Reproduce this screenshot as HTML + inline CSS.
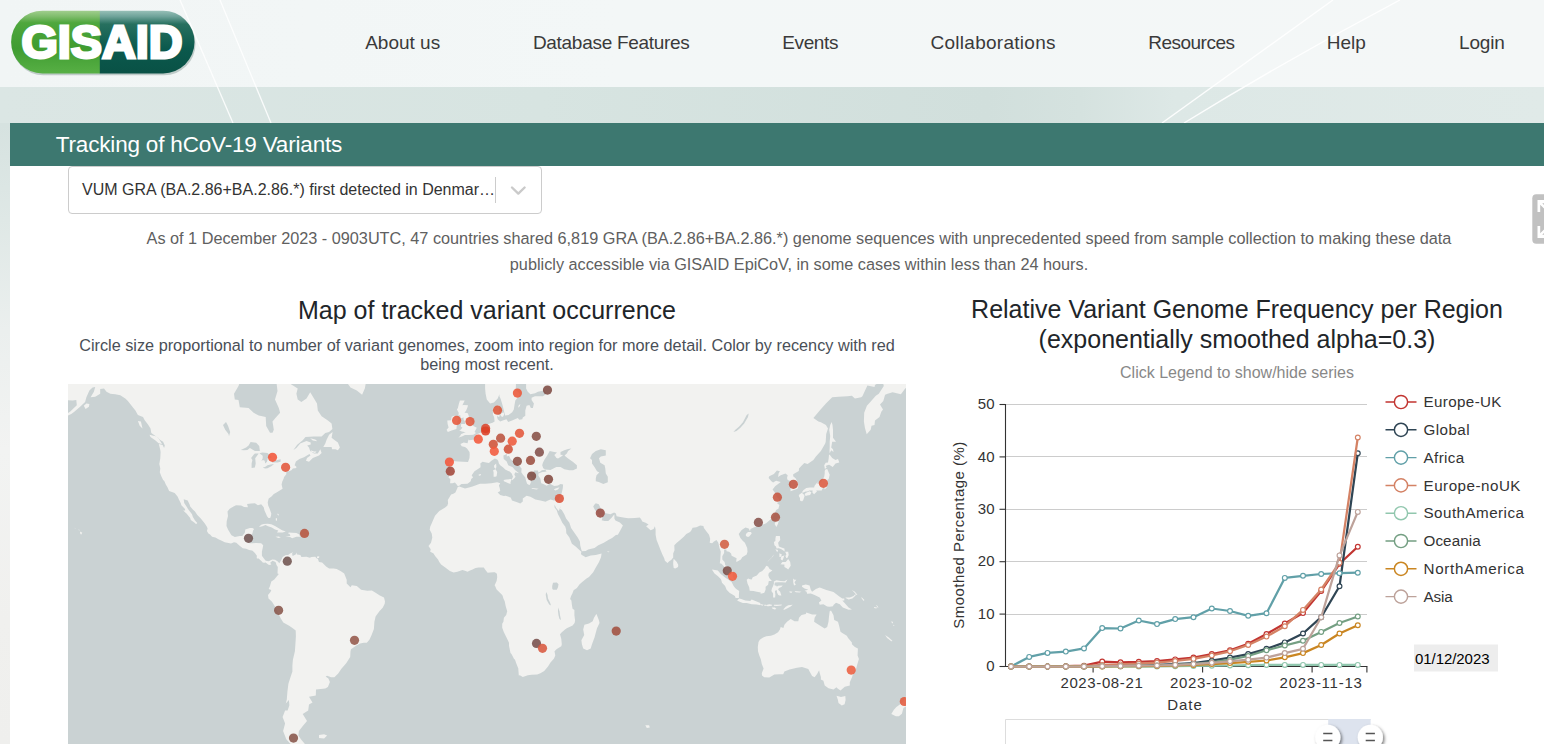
<!DOCTYPE html>
<html><head><meta charset="utf-8"><title>GISAID - hCov19 Variants</title>
<style>
*{box-sizing:border-box;margin:0;padding:0}
html,body{width:1544px;height:744px;overflow:hidden}
body{font-family:"Liberation Sans",sans-serif;position:relative;background:linear-gradient(180deg,#d3e0de 0px,#d6e2e0 125px,#dfe8e6 220px,#ebefee 330px,#f2f3f2 450px,#f0f0ee 620px,#efefed 744px)}
.abs{position:absolute;white-space:nowrap}
#hdr{position:absolute;left:0;top:0;width:1544px;height:87px;background:linear-gradient(90deg,#f1f5f5 0%,#f3f7f7 40%,#f4f7f7 100%);box-shadow:0 1px 5px rgba(40,70,65,.42)}
#sub{position:absolute;left:0;top:87px;width:1544px;height:36px;background:linear-gradient(90deg,#dbe6e4 0%,#d7e4e1 35%,#d1dfdc 64%,#d5e2df 70%,#dde8e6 76%,#e0eae8 100%)}
.nav{position:absolute;top:30.5px;font-size:19px;line-height:24px;color:#3a3a3a;white-space:nowrap}
#banner{position:absolute;left:10px;top:123px;width:1534px;height:43px;background:#3d7870}
#banner span{position:absolute;left:45.8px;top:8.2px;font-size:22.5px;letter-spacing:-.18px;line-height:28px;color:#fff;white-space:nowrap}
#panel{position:absolute;left:10px;top:166px;width:1534px;height:578px;background:#fff}
#dd{position:absolute;left:68px;top:166px;width:474.3px;height:47.6px;border:1px solid #ccc;border-radius:4px;background:#fff}
#dd .t{position:absolute;left:13px;top:13.3px;font-size:16px;line-height:20px;color:#333;white-space:nowrap}
#dd .sep{position:absolute;left:426.3px;top:10.3px;width:1px;height:25.4px;background:#ccc}
.c{position:absolute;text-align:center;white-space:nowrap}
#map{position:absolute;left:68px;top:384px;width:838px;height:360px;background:#cad2d3;overflow:hidden}
</style></head><body>
<div id="hdr"></div>
<div id="sub"></div>
<svg class="abs" style="left:0;top:0" width="1544" height="123" viewBox="0 0 1544 123">
<path d="M180 0L233 123" stroke="#fff" stroke-width="1.3" opacity=".85" fill="none"/>
<path d="M220 0L271 123" stroke="#fff" stroke-width="1.3" opacity=".85" fill="none"/>
<path d="M1333 0L1162 123" stroke="#fff" stroke-width="1.4" opacity=".9" fill="none"/>
<path d="M1400 0Q1290 58 1184 123" stroke="#fff" stroke-width="1.4" opacity=".9" fill="none"/>
</svg>
<!-- logo -->
<svg class="abs" style="left:8px;top:7px" width="192" height="72" viewBox="0 0 192 72">
<defs>
<linearGradient id="lg1" x1="0" y1="0" x2="0" y2="1"><stop offset="0" stop-color="#a5d092"/><stop offset=".1" stop-color="#7fbd6c"/><stop offset=".2" stop-color="#4fa73d"/><stop offset=".6" stop-color="#3f9c31"/><stop offset="1" stop-color="#58b045"/></linearGradient>
<linearGradient id="lg2" x1="0" y1="0" x2="0" y2="1"><stop offset="0" stop-color="#9cc3bb"/><stop offset=".1" stop-color="#6fa39a"/><stop offset=".22" stop-color="#27705f"/><stop offset=".6" stop-color="#0b594d"/><stop offset="1" stop-color="#095145"/></linearGradient>
<clipPath id="pill"><rect x="3.1" y="3.7" width="183.4" height="62.7" rx="31.35"/></clipPath>
</defs>
<rect x="4.1" y="5.6" width="183.4" height="62.7" rx="31.35" fill="#56746d" opacity=".32"/>
<g clip-path="url(#pill)"><rect x="3" y="3" width="89" height="64" fill="url(#lg1)"/><rect x="91.8" y="3" width="97" height="64" fill="url(#lg2)"/></g>
<text x="13.4" y="51.2" font-family="Liberation Sans, sans-serif" font-weight="bold" font-size="47" fill="#fff" stroke="#fff" stroke-width="2.9" stroke-linejoin="miter" textLength="161.2" lengthAdjust="spacingAndGlyphs">GISAID</text>
</svg>
<div class="nav" style="left:365.2px">About us</div>
<div class="nav" style="left:532.9px;letter-spacing:-.29px">Database Features</div>
<div class="nav" style="left:782.3px;letter-spacing:-.4px">Events</div>
<div class="nav" style="left:930.5px;letter-spacing:.27px">Collaborations</div>
<div class="nav" style="left:1148.2px;letter-spacing:-.5px">Resources</div>
<div class="nav" style="left:1326.8px">Help</div>
<div class="nav" style="left:1459px;letter-spacing:-.18px">Login</div>

<div id="banner"><span>Tracking of hCoV-19 Variants</span></div>
<div id="panel"></div>
<div id="dd"><div class="t">VUM GRA (BA.2.86+BA.2.86.*) first detected in Denmar…</div><div class="sep"></div>
<svg class="abs" style="left:440px;top:15px" width="20" height="16" viewBox="0 0 20 16"><path d="M3 5.5L9.3 11.6L15.6 5.5" fill="none" stroke="#cacaca" stroke-width="2.4" stroke-linecap="round" stroke-linejoin="round"/></svg></div>

<div class="c" id="p1" style="left:68px;width:1462px;top:225.1px;font-size:16.25px;line-height:26px;color:#606060">As of 1 December 2023 - 0903UTC, 47 countries shared 6,819 GRA (BA.2.86+BA.2.86.*) genome sequences with unprecedented speed from sample collection to making these data<br>publicly accessible via GISAID EpiCoV, in some cases within less than 24 hours.</div>

<div class="c" id="mt" style="left:68px;width:838px;top:296px;font-size:25px;line-height:28px;color:#212529">Map of tracked variant occurrence</div>
<div class="c" id="ms" style="left:68px;width:838px;top:336.1px;font-size:16.25px;line-height:19.1px;color:#4a4f57">Circle size proportional to number of variant genomes, zoom into region for more detail. Color by recency with red<br>being most recent.</div>

<div class="c" id="ct" style="left:937px;width:600px;top:294.8px;font-size:25px;line-height:29.7px;color:#212529">Relative Variant Genome Frequency per Region<br>(exponentially smoothed alpha=0.3)</div>
<div class="c" id="cl" style="left:937px;width:600px;top:363.4px;font-size:16px;line-height:20px;color:#888">Click Legend to show/hide series</div>

<div id="map"><svg width="838" height="360" viewBox="0 0 838 360" style="display:block">
<path d="M-18.1 -21.2L-13.1 -14.7L-0.5 -14.1L-0.5 -8.9L-9.3 -6.1L-13.1 1.4L-8.1 8.2L-3.0 9.7L-3.0 16.1L4.5 16.6L8.3 16.1L8.8 21.3L2.0 27.8L-4.3 31.4L-10.1 34.9L-3.0 33.1L3.3 30.0L6.3 27.8L12.1 22.7L17.1 18.0L18.4 13.2L21.4 6.6L24.6 3.5L27.2 3.0L25.9 7.7L22.6 13.2L27.2 12.7L32.2 9.7L32.2 5.1L36.0 4.6L38.5 7.7L42.3 9.7L47.3 10.2L52.3 11.2L57.3 14.6L59.9 17.1L63.6 21.8L67.4 26.4L69.9 30.9L75.0 33.1L76.7 36.2L80.0 40.4L82.5 44.6L83.3 49.1L88.8 53.0L92.6 56.2L95.1 57.7L96.8 61.5L96.1 64.1L94.6 61.1L90.8 60.0L92.3 66.0L92.6 68.1L92.3 74.2L91.3 80.1L92.3 84.6L91.8 88.2L93.1 91.8L95.1 96.0L96.3 97.0L97.8 100.4L99.6 103.6L101.1 106.9L104.6 108.2L106.7 109.1L109.7 112.7L110.9 115.6L112.7 118.9L113.4 121.2L117.0 124.9L117.2 126.4L115.2 126.6L118.7 129.8L122.2 134.0L122.8 135.9L127.0 138.9L128.0 140.3L129.3 138.9L127.0 136.5L124.8 132.8L124.0 130.3L120.7 126.1L118.5 122.4L116.2 118.9L115.7 115.3L119.7 116.5L121.5 120.3L122.2 122.6L125.3 126.1L127.0 127.5L129.3 130.9L132.8 134.5L136.8 139.5L138.9 142.7L139.6 144.6L138.9 147.1L140.4 149.5L142.1 150.5L144.1 152.7L147.4 153.5L150.4 155.3L153.2 156.6L156.7 158.2L160.5 159.0L163.0 159.5L166.0 158.2L168.3 158.7L170.5 160.8L172.6 162.6L174.8 164.2L178.1 164.7L181.1 166.0L183.9 166.5L184.6 166.8L186.9 169.1L188.9 171.7L188.7 173.4L188.9 174.5L190.7 174.5L191.7 175.5L193.9 177.5L194.7 178.5L196.2 178.8L197.7 178.5L199.2 179.8L201.0 181.1L203.3 180.6L202.2 178.8L204.5 176.8L207.0 177.8L207.8 178.5L208.5 181.1L210.0 179.6L211.3 179.3L209.8 177.5L207.0 175.7L204.3 175.5L200.7 177.3L197.7 176.8L195.7 174.2L193.9 171.7L193.9 167.8L194.7 163.9L195.2 161.3L193.2 159.2L188.2 159.0L184.4 159.2L181.6 159.2L180.9 159.0L182.6 156.1L182.4 152.1L184.4 149.5L185.1 146.5L186.1 144.9L184.4 144.1L181.9 144.1L177.3 145.4L176.8 148.7L174.3 152.1L171.8 151.9L166.8 152.9L163.5 151.3L162.8 150.3L160.0 145.4L158.5 141.9L158.7 137.3L160.0 132.0L159.5 127.5L161.7 124.7L165.5 122.6L168.0 121.2L173.1 121.5L176.1 122.9L179.9 123.2L179.1 120.0L183.1 119.5L186.9 119.2L189.9 121.2L193.2 120.3L195.7 123.2L196.5 126.6L198.2 130.3L199.0 132.3L200.5 134.0L202.2 134.0L203.0 131.7L203.3 129.5L201.7 124.9L200.2 121.5L199.7 118.3L200.7 114.5L203.5 112.4L205.8 110.0L208.5 108.5L211.8 106.6L214.6 104.8L213.6 100.4L214.3 97.6L215.6 94.7L216.1 93.1L218.3 90.2L218.3 87.6L220.9 87.2L223.4 86.2L224.9 84.6L226.9 84.2L228.4 83.9L228.2 82.5L226.6 81.2L227.9 77.4L231.4 74.9L236.0 73.2L238.5 71.8L241.5 70.0L242.5 71.4L239.0 73.9L238.0 76.7L241.0 77.7L244.8 73.9L251.0 71.4L253.6 68.9L252.3 65.2L249.8 69.6L246.0 69.6L242.2 67.1L241.0 63.4L239.2 61.5L242.7 60.4L242.7 58.5L238.5 56.9L232.2 59.6L228.4 64.1L225.4 66.0L229.2 60.7L234.7 56.2L237.5 53.0L246.0 52.6L253.6 52.6L257.3 49.1L261.1 47.9L264.4 45.0L263.6 39.6L259.9 36.6L253.6 32.3L249.8 26.4L249.0 19.5L246.0 14.6L242.2 8.2L238.5 14.6L233.4 18.0L229.7 15.6L228.4 9.7L229.7 4.6L223.4 0.4L218.3 -2.3L208.3 -2.9L209.5 7.1L207.0 15.6L210.8 24.1L212.1 28.7L207.0 34.4L204.5 37.5L205.8 45.8L204.5 48.7L202.0 48.7L198.2 42.1L197.7 33.1L190.7 31.4L185.6 28.7L180.6 24.1L171.8 23.2L170.5 16.1L166.8 15.6L166.0 9.7L170.5 2.0L173.1 -5.0L176.8 -8.9L178.1 -66.1L-18.1 -66.1ZM81.5 50.7L87.5 52.3L90.1 53.8L94.1 60.0L90.6 59.2L87.5 56.5L82.5 53.0ZM15.8 21.8L18.4 19.5L21.4 19.9L20.9 22.7L17.6 25.1ZM69.9 37.0L72.9 37.5L74.5 44.6L71.7 41.7ZM255.3 63.0L257.3 59.6L258.6 55.8L261.1 50.7L264.6 47.9L263.6 53.8L266.1 55.8L269.9 58.5L271.9 63.4L269.9 66.3L267.4 65.2L264.1 65.2L263.6 63.0ZM242.7 66.3L246.0 67.4L248.5 67.4L247.0 68.9L243.5 67.8ZM242.2 54.2L247.3 55.4L249.3 57.3L244.8 56.5ZM294.1 10.7L296.8 4.6L298.8 -6.1L303.9 -17.6L316.5 -30.0L329.0 -50.6L266.1 -50.6L271.2 -30.0L274.9 -11.8L278.7 -1.8L282.5 3.5L288.8 6.6ZM190.9 143.0L193.2 140.8L195.7 140.0L199.5 139.7L203.3 140.3L207.0 141.9L209.5 143.6L214.1 146.3L217.8 147.6L214.6 148.4L209.0 148.4L210.3 146.5L207.0 145.4L203.8 143.6L200.0 142.2L197.5 141.1L194.4 142.2ZM217.3 151.9L222.1 152.9L224.1 154.2L228.4 152.7L232.4 152.7L230.9 150.3L228.4 148.9L224.1 148.7L220.9 148.4L219.9 149.2L221.6 150.0L222.4 151.9ZM207.5 152.7L210.8 152.4L212.8 153.5L210.3 154.0ZM235.5 152.4L239.2 152.7L238.7 153.5L235.5 153.5ZM249.0 172.4L251.3 172.2L251.0 174.0L249.0 174.0ZM207.8 134.2L209.0 134.2L209.0 136.7L207.8 136.5ZM209.8 129.5L210.8 130.6L210.5 131.7L209.3 130.3ZM12.1 147.6L14.3 148.7L13.1 150.8L12.1 149.2ZM10.3 145.4L11.8 146.0L11.1 146.5ZM6.5 143.8L7.8 144.4L7.0 144.6ZM208.5 181.1L209.8 183.1L209.5 189.4L210.8 189.9L206.3 195.5L203.3 197.5L202.0 202.0L200.7 205.0L203.3 206.0L202.5 208.1L200.0 211.1L200.5 214.6L204.0 217.7L206.8 222.2L210.5 229.9L212.8 234.6L215.3 238.5L221.6 242.1L225.1 244.5L227.7 246.6L227.9 252.2L227.4 260.3L226.9 267.3L224.9 275.8L224.4 281.6L224.4 287.5L221.9 295.1L220.4 299.8L219.4 307.8L218.8 315.5L217.8 319.5L220.9 316.1L221.4 321.3L219.6 326.5L217.1 326.5L214.6 333.0L217.1 339.4L215.1 347.1L218.3 355.2L222.1 359.4L225.9 362.4L228.4 368.1L235.2 369.9L241.0 365.0L232.9 355.2L232.4 354.4L230.4 351.5L230.9 347.1L234.4 342.5L239.0 337.1L234.7 330.1L240.2 326.5L241.0 320.6L244.5 318.5L241.0 312.8L247.8 311.4L248.0 305.6L257.3 304.6L259.9 303.0L261.9 297.9L260.4 294.5L257.6 292.4L259.1 291.8L263.1 293.3L266.4 293.3L270.2 289.6L273.4 284.8L278.2 279.3L282.2 272.9L282.5 267.3L283.0 265.3L288.0 261.7L292.1 259.5L295.8 258.7L298.8 258.7L301.4 255.7L303.4 251.4L305.9 245.0L306.4 237.7L307.6 232.5L311.4 227.3L314.7 223.8L316.7 219.7L317.0 217.4L316.0 213.4L311.4 211.3L307.6 208.8L303.9 206.5L299.3 206.8L293.1 205.8L288.8 202.0L283.8 201.3L282.5 203.3L278.7 199.5L278.7 195.7L276.2 189.4L272.9 187.2L268.7 184.9L265.6 184.6L261.1 184.4L258.1 182.4L254.1 178.5L251.0 178.0L249.8 174.7L248.5 174.2L247.3 172.7L243.5 172.9L241.7 173.7L238.5 172.7L233.4 172.9L232.4 171.1L228.9 170.4L228.4 168.6L227.7 170.4L224.6 171.9L224.1 169.6L225.1 168.3L222.1 169.6L220.1 170.9L217.8 170.9L214.6 172.9L213.3 176.0L211.3 179.3L209.8 177.5ZM251.0 351.1L256.1 350.3L259.1 351.5L256.1 354.4L251.0 354.0ZM417.1 -0.7L417.1 -92.7L857.3 -92.7L857.3 -3.4L854.8 -2.3L842.2 0.4L837.2 4.6L832.9 10.2L824.6 8.2L819.6 9.7L817.1 10.7L815.3 17.1L812.0 20.4L815.0 25.5L813.3 27.8L811.5 33.1L807.0 36.6L806.5 40.9L803.5 41.7L802.7 45.8L798.7 50.3L796.9 43.8L795.9 37.5L796.2 28.7L798.9 21.8L803.2 17.1L807.8 11.7L810.8 9.7L815.8 2.0L814.5 -3.4L807.0 0.9L806.5 3.0L799.4 1.4L794.4 12.2L793.2 13.2L786.9 14.6L783.9 11.7L779.3 12.2L770.5 12.7L764.2 13.2L757.9 19.5L751.7 26.4L745.4 34.0L750.4 37.5L752.9 38.3L757.9 40.9L760.0 44.6L758.2 49.9L757.7 57.7L757.2 59.6L752.9 67.1L747.9 72.5L745.4 76.0L739.6 80.1L736.3 79.1L733.3 81.9L731.0 84.6L730.8 86.9L725.2 90.2L725.2 92.2L727.8 94.4L730.0 99.2L730.3 102.3L729.5 104.8L726.0 106.0L722.5 107.2L722.7 102.9L722.7 99.2L723.0 97.3L719.7 96.0L719.0 94.1L719.7 91.2L717.4 89.5L712.7 91.2L710.1 93.1L710.6 89.5L711.9 87.2L708.9 86.6L705.9 89.9L701.3 92.2L700.6 94.1L703.4 97.3L705.1 98.6L708.1 96.7L712.7 97.9L710.1 100.1L707.1 102.3L704.6 105.4L707.1 109.1L708.9 113.0L711.2 115.3L711.2 117.7L708.9 118.9L711.4 120.9L710.4 124.7L708.1 126.1L705.6 131.7L703.1 135.1L701.6 136.2L698.1 139.2L692.0 141.7L690.0 142.2L686.2 143.3L682.5 144.9L682.0 147.3L680.7 144.4L677.4 143.6L673.7 146.0L670.7 150.0L672.4 154.0L674.9 156.9L676.9 158.7L679.2 163.9L679.5 167.8L678.7 170.6L674.2 173.2L672.9 175.5L669.4 177.5L668.1 177.8L668.6 174.2L666.1 172.9L663.6 171.7L663.1 169.6L661.1 167.8L658.6 167.3L658.3 165.5L656.1 165.5L656.1 169.1L654.3 172.2L654.3 175.5L656.6 178.0L657.3 181.3L660.6 183.1L662.3 184.4L664.4 186.9L664.9 189.4L664.9 192.7L666.6 196.0L664.9 196.2L662.3 194.5L659.3 191.9L657.6 188.9L656.8 185.9L656.6 183.1L653.5 179.8L651.8 179.3L652.3 175.5L652.5 171.7L652.8 167.8L651.5 163.9L650.3 158.7L648.5 156.1L646.0 157.4L644.2 159.2L641.7 158.7L642.2 154.8L641.0 150.8L638.5 147.6L635.9 144.1L635.4 141.9L632.2 141.4L628.4 143.3L624.6 143.8L623.4 146.3L622.1 148.1L618.3 150.0L615.8 152.7L611.5 156.6L608.8 158.7L606.3 161.3L606.5 166.3L605.2 169.6L605.2 173.4L603.2 176.0L601.2 177.3L599.5 179.1L596.9 176.8L596.2 174.2L594.4 170.4L592.7 166.5L590.7 161.3L588.6 156.1L587.6 150.8L587.6 145.4L586.9 142.2L585.6 144.9L582.6 146.3L578.1 142.2L580.6 140.6L577.6 138.7L574.3 137.6L573.0 135.1L571.8 133.4L566.8 134.0L560.5 134.2L556.7 133.7L552.4 133.1L548.6 132.3L547.9 129.5L546.1 128.6L542.4 130.3L537.8 129.2L534.1 126.6L532.3 123.5L530.8 120.3L527.8 119.2L526.5 120.6L525.2 122.4L527.0 126.1L530.3 129.8L530.8 132.6L532.3 134.5L532.8 131.7L533.6 131.4L534.3 134.5L533.6 136.2L536.6 137.0L540.3 137.0L541.3 135.9L543.6 133.7L545.6 131.2L546.4 130.6L546.4 134.5L547.4 136.5L551.9 138.4L554.9 141.4L552.4 146.3L549.9 150.8L547.9 151.1L544.1 154.0L540.3 156.1L535.8 158.7L530.3 161.3L526.5 163.9L520.2 165.5L517.7 167.0L513.9 167.3L513.2 165.2L512.2 161.3L511.9 157.4L509.7 153.5L506.4 148.7L503.1 144.1L501.4 138.7L498.1 134.5L496.3 130.3L493.8 126.1L492.0 124.7L492.5 121.8L491.3 126.1L490.8 126.9L488.0 123.8L486.5 120.6L486.5 123.2L488.8 126.6L490.0 130.3L492.3 134.5L494.3 138.7L497.3 142.7L498.1 145.4L498.3 149.2L501.4 153.5L503.9 159.8L507.6 162.6L511.4 166.0L513.4 167.8L512.9 170.1L513.9 170.9L517.7 173.2L522.7 171.4L527.8 170.9L533.6 169.6L533.0 173.2L531.0 178.0L527.8 183.6L525.2 188.2L521.0 193.0L518.5 194.5L513.9 198.2L511.4 200.5L508.9 204.0L505.6 206.3L504.4 209.6L503.1 212.1L502.1 215.1L503.4 216.6L503.9 221.0L504.6 224.8L506.4 226.1L506.4 231.2L507.1 236.4L506.6 239.0L504.6 241.6L498.8 244.2L497.3 245.3L493.8 248.2L492.0 250.3L493.3 254.9L493.8 260.3L493.3 262.3L488.8 265.0L486.5 267.3L487.3 271.5L486.0 274.6L482.5 278.4L480.0 282.5L476.2 286.9L472.4 289.3L469.2 290.5L463.6 290.8L459.8 291.2L454.8 293.0L451.8 291.2L450.8 291.5L450.5 287.5L450.3 284.5L448.5 280.1L447.0 275.8L445.8 274.6L443.5 270.1L442.5 269.0L441.0 261.7L441.0 258.7L438.5 253.6L435.9 248.2L434.2 243.7L434.2 239.8L435.4 237.7L435.9 233.8L438.2 230.9L439.2 227.3L437.7 222.2L436.7 217.2L435.4 214.6L434.7 212.1L434.2 211.1L432.2 209.1L428.6 205.5L427.1 202.0L426.6 201.3L427.9 198.5L428.6 197.0L429.2 193.2L428.9 189.7L426.9 188.2L425.4 188.2L422.1 188.4L419.6 188.7L417.1 185.6L415.8 183.6L413.1 183.4L410.5 183.6L407.5 184.1L404.5 185.4L402.0 186.4L399.5 187.7L397.0 186.7L394.4 186.1L389.4 187.7L385.6 188.4L381.9 186.9L377.3 183.6L373.1 180.6L371.3 178.0L370.0 175.5L367.3 172.2L365.3 169.3L362.2 167.8L362.7 165.2L360.5 162.1L363.0 158.7L364.3 153.5L363.7 149.5L361.7 145.7L362.2 142.7L364.3 138.1L367.0 131.7L371.3 126.9L376.8 123.8L379.3 121.8L380.1 119.2L379.8 115.9L383.1 110.6L385.4 109.7L387.4 108.5L389.4 103.9L389.7 102.9L391.2 102.6L397.0 104.5L402.0 103.2L404.5 102.6L412.0 99.8L417.1 99.8L423.4 99.2L429.2 98.2L432.2 99.2L430.9 101.4L431.7 103.9L432.2 106.9L429.7 108.5L432.2 110.9L435.9 112.1L437.7 111.8L442.7 113.6L444.0 116.5L448.5 118.0L452.3 119.5L454.8 117.4L454.8 114.5L458.6 111.8L462.4 112.7L467.4 115.6L472.4 116.5L477.5 117.7L480.0 116.5L482.5 115.6L485.8 116.5L490.5 116.5L492.3 112.1L493.8 108.8L494.8 103.9L495.1 100.4L492.5 100.1L490.0 101.4L486.3 102.0L481.7 99.8L478.7 101.7L475.4 100.1L473.2 99.2L472.4 94.7L470.4 91.8L470.4 89.5L473.7 88.2L477.5 87.2L477.5 85.6L474.9 86.2L472.4 87.6L470.4 88.6L469.9 86.6L466.1 86.6L464.9 89.5L464.1 88.6L462.1 87.9L461.6 91.2L463.1 92.8L464.9 96.0L464.9 97.0L462.4 96.0L462.9 98.2L461.9 100.8L461.1 101.1L459.1 99.8L458.1 96.7L457.3 93.4L454.8 90.5L453.3 88.2L453.6 84.6L452.3 82.9L451.0 81.2L446.0 77.7L442.7 75.3L441.0 71.8L438.7 72.5L439.0 70.0L435.4 71.4L435.7 74.9L438.7 77.4L440.2 81.2L444.7 83.2L447.0 85.9L451.0 89.2L447.3 88.2L446.3 90.5L447.5 92.8L446.0 94.7L444.0 96.3L444.0 95.1L445.0 92.8L443.7 89.5L441.7 87.6L440.2 86.9L437.2 85.6L435.2 83.5L432.2 81.2L430.9 79.5L430.2 76.7L429.2 75.6L426.9 74.6L423.4 76.7L420.9 79.1L418.1 78.4L414.6 77.7L412.3 79.5L412.5 81.5L412.5 83.2L410.0 84.9L406.5 87.2L403.7 91.2L405.0 93.4L403.2 95.1L402.7 97.3L399.5 99.8L393.4 100.1L390.9 102.0L389.4 101.7L388.7 100.4L386.9 98.6L384.4 99.2L382.1 99.2L382.4 95.1L380.6 93.8L382.1 88.9L382.6 85.6L382.1 82.2L381.1 79.5L384.4 77.0L389.9 77.4L394.9 77.7L400.0 78.1L401.5 73.9L401.7 70.3L401.5 68.1L399.0 64.5L397.0 63.0L393.7 62.2L392.4 60.0L395.7 58.5L399.5 59.2L400.5 55.4L401.5 56.2L404.8 55.8L408.3 53.4L408.5 50.3L410.8 49.5L413.3 48.3L414.6 45.8L416.3 41.7L418.3 40.4L422.1 39.6L424.6 38.7L426.6 37.5L426.1 33.1L424.9 30.5L424.9 24.1L428.4 23.2L431.2 20.9L430.9 26.4L431.9 27.8L430.2 29.6L428.9 32.3L429.7 35.3L432.2 37.5L434.7 36.6L438.5 35.3L440.2 37.9L444.7 36.2L449.8 34.0L451.3 35.7L454.3 35.3L454.8 33.6L457.3 31.8L457.3 26.4L458.6 21.8L461.4 20.9L462.9 24.1L464.9 24.1L465.9 19.5L463.6 16.1L463.6 13.7L466.9 12.2L471.2 12.2L474.9 12.2L478.7 9.7L476.2 6.6L469.9 7.7L467.1 9.2L462.4 10.2L459.8 7.7L458.1 4.6L458.1 -0.7L458.1 -23.7L448.0 -23.7L448.0 -0.7L447.8 4.6L447.8 6.1L451.0 8.7L452.0 10.7L450.0 13.2L447.3 16.6L446.5 20.9L445.8 25.5L444.2 28.2L440.5 30.9L437.2 31.4L436.4 28.7L434.7 21.8L432.7 15.1L431.4 12.2L431.4 10.2L429.7 14.6L425.9 18.5L422.1 19.5L418.8 15.6L417.6 9.7L417.1 4.6ZM390.2 53.4L393.9 52.6L397.0 51.1L400.7 51.1L405.3 50.7L408.0 49.1L406.5 47.9L408.8 43.8L405.3 42.1L404.5 39.2L404.0 37.0L401.5 34.9L400.5 30.9L399.5 29.1L396.5 28.7L398.2 26.4L399.5 23.2L400.0 21.3L395.7 20.9L394.4 21.3L396.7 16.6L391.9 16.6L390.7 20.4L389.9 24.1L388.9 25.5L390.7 28.7L390.4 31.8L392.2 30.9L392.4 33.6L391.7 34.4L395.7 33.6L395.4 35.3L397.0 37.5L397.0 40.0L393.2 40.0L392.9 42.5L394.4 43.8L392.7 45.8L391.2 46.2L393.9 47.5L396.5 47.9L397.7 47.9L395.7 49.1L393.2 49.9L391.9 52.3ZM388.9 40.4L388.4 45.0L383.6 46.6L379.8 47.9L378.6 45.8L380.6 43.4L379.6 40.0L379.3 36.6L383.1 36.2L383.6 32.7L386.1 31.8L389.2 32.3L390.7 35.3L389.4 37.5ZM432.4 30.0L435.4 28.2L436.2 30.0L435.4 32.3L434.2 33.1L432.7 31.8ZM429.2 30.9L431.7 30.9L431.4 32.7L429.7 32.7ZM450.0 23.7L451.8 22.3L452.3 19.9L450.8 21.3ZM435.7 96.0L438.2 95.4L443.7 95.1L442.5 98.2L442.5 100.1L440.5 99.2L435.9 97.3ZM425.1 86.2L427.6 85.2L429.2 87.9L428.6 92.2L427.1 92.8L425.6 92.8L425.6 88.6ZM426.1 81.5L428.1 79.5L428.4 82.9L427.6 84.9L426.1 83.2ZM463.6 103.9L466.1 104.2L470.7 104.8L468.6 105.4L463.9 104.8ZM485.8 105.4L487.5 104.5L491.5 103.2L490.0 105.4L487.5 106.6ZM410.5 90.8L412.5 89.9L413.1 90.8L412.0 91.8L410.8 91.5ZM605.7 174.7L608.8 178.0L610.3 181.1L610.0 183.1L607.3 184.6L605.7 183.9L605.2 180.6L605.2 178.0ZM528.5 229.9L531.0 236.4L531.5 239.0L529.0 244.2L526.5 253.6L524.0 260.3L522.7 264.5L519.0 266.2L515.2 264.5L513.9 260.3L513.4 256.3L516.2 250.9L515.2 245.5L516.4 240.8L521.0 239.5L524.7 237.2L526.0 233.8L527.8 230.7ZM577.3 341.3L581.1 341.3L581.8 343.6L578.8 344.0ZM538.8 167.5L541.6 167.5L540.3 168.3ZM763.0 226.6L765.5 231.2L766.2 235.9L770.0 237.7L771.3 242.6L772.5 247.7L774.3 249.0L778.8 251.7L780.1 254.1L783.9 258.4L783.9 260.3L786.9 263.1L789.9 264.5L789.6 271.5L790.9 274.9L789.4 280.1L788.1 285.1L786.4 287.2L784.9 290.2L783.9 293.6L781.8 298.2L781.8 301.4L776.8 302.7L772.5 306.5L769.3 304.3L768.5 303.3L765.5 305.6L760.5 304.3L756.7 301.4L755.4 296.7L752.9 295.4L752.9 293.0L751.7 289.0L751.1 286.3L749.1 289.9L746.6 293.3L744.1 292.1L741.6 287.5L740.3 285.1L734.0 283.1L729.0 283.7L721.5 285.4L716.4 287.5L715.2 290.2L711.2 290.2L706.4 290.5L701.3 293.6L696.3 293.3L694.0 291.5L693.8 289.3L695.6 284.5L693.8 280.1L692.8 275.2L691.3 271.5L690.0 267.3L689.8 263.1L690.5 257.9L691.8 255.7L695.1 253.6L698.3 252.2L702.9 251.7L706.4 250.6L710.1 248.2L711.9 245.5L712.7 242.9L715.4 244.0L716.4 240.8L719.0 237.7L722.7 235.1L726.5 237.2L730.3 237.2L731.0 233.8L733.5 230.9L737.8 229.9L738.3 228.4L744.1 230.4L748.6 230.4L746.6 233.8L746.1 237.7L749.1 239.8L754.2 242.9L756.7 244.5L759.2 242.9L760.5 237.7L761.0 232.5L761.7 227.3ZM768.5 311.8L773.0 313.1L777.3 312.1L777.6 316.1L776.6 320.2L773.8 321.6L770.5 318.9L769.8 315.5ZM734.0 201.5L737.8 200.5L741.6 201.5L742.8 205.8L744.1 207.8L747.9 205.0L751.7 203.5L758.4 206.0L765.5 208.1L771.3 212.6L774.3 214.6L776.3 214.6L776.3 216.4L774.3 216.4L777.3 219.7L780.6 223.5L783.9 225.6L780.6 225.8L774.8 223.5L771.8 220.2L768.0 218.7L765.5 221.0L765.0 222.2L761.7 222.7L759.2 222.5L755.4 220.2L751.7 220.7L750.9 218.4L753.4 216.6L751.7 213.4L746.6 211.1L742.8 209.6L739.1 209.8L738.6 207.8L736.6 206.8L740.3 205.8L736.6 204.5L734.0 202.8ZM678.7 195.7L679.5 199.5L681.2 203.3L681.7 206.8L685.5 207.1L688.8 207.8L692.8 208.6L692.5 209.8L696.3 208.8L697.6 205.8L697.6 202.8L700.1 200.8L700.8 197.0L703.9 197.0L701.3 194.0L700.3 191.2L700.8 188.9L704.4 186.4L701.6 184.9L700.1 182.6L698.3 181.8L696.6 184.4L694.3 186.9L691.3 188.4L688.8 191.4L684.7 193.2L683.7 195.5L682.0 195.2L680.2 194.5ZM644.2 185.4L649.8 186.4L652.8 189.9L657.1 193.5L659.8 195.2L663.6 198.0L665.6 202.0L667.4 204.3L668.6 205.3L671.2 207.1L670.9 210.8L670.9 214.1L669.1 214.1L667.6 214.1L666.9 212.1L663.6 210.1L661.8 209.1L658.6 205.8L657.1 202.0L654.0 198.7L653.0 195.2L650.0 192.2L646.5 189.4L644.2 186.1ZM669.1 216.6L671.2 214.4L673.2 214.9L677.4 216.4L682.2 216.9L683.7 215.6L688.0 217.2L692.3 218.9L692.3 221.2L688.8 220.5L683.7 220.2L678.7 218.9L674.9 218.9L672.2 217.9ZM692.5 219.9L695.6 220.7L694.3 221.7L692.5 220.7ZM696.3 220.7L698.1 220.7L697.6 222.0L696.3 221.7ZM698.3 221.0L701.3 220.2L703.9 220.7L703.9 221.7L700.1 222.2L698.3 222.0ZM705.9 220.7L710.1 220.7L713.9 220.5L713.4 221.5L708.9 222.0L705.9 221.7ZM703.9 223.5L706.9 223.5L708.4 225.0L706.4 225.6L703.9 224.3ZM715.2 225.6L717.7 222.7L720.2 221.2L724.7 220.7L722.7 222.5L719.0 224.5L716.4 225.8ZM705.9 197.5L708.4 196.2L712.7 197.0L716.4 197.2L719.5 195.5L717.7 198.5L713.9 198.2L710.1 198.2L706.9 198.5L706.4 201.3L708.9 202.0L708.4 203.0L710.1 201.8L714.7 201.5L713.4 203.0L710.9 204.0L710.1 205.8L712.2 207.8L712.7 209.6L713.4 211.6L711.4 211.6L710.1 210.8L708.9 208.3L708.9 206.3L707.6 206.5L706.9 207.1L707.4 210.8L707.1 213.4L705.1 213.4L705.1 209.6L703.4 207.1L703.9 204.5L705.1 202.0L705.9 199.5ZM725.2 194.5L726.5 195.7L728.3 195.7L726.5 198.2L727.8 200.8L726.0 201.5L725.2 198.2L725.2 197.0ZM726.5 207.1L733.5 207.8L731.5 208.6L727.8 208.3ZM721.5 207.3L724.5 207.8L723.2 209.1L721.5 208.3ZM707.9 152.1L711.9 152.1L712.2 156.1L710.1 158.7L710.9 162.6L713.4 163.4L716.4 164.4L716.7 167.5L715.7 166.8L713.4 165.2L710.9 164.2L708.6 164.4L707.9 162.6L706.4 161.3L705.9 157.9L707.4 157.1L707.4 154.8ZM707.4 165.2L710.1 166.0L709.4 168.3L708.4 167.0ZM699.3 178.3L702.6 174.7L705.1 172.2L705.6 170.6L703.9 173.2L700.8 176.3ZM711.4 169.3L713.9 170.4L712.9 172.7L711.4 172.9ZM713.7 171.9L715.2 171.9L716.4 171.1L715.4 174.2L714.4 176.5L712.9 175.5L712.7 174.2ZM717.2 167.8L720.2 167.8L720.7 171.1L719.5 173.7L718.4 174.2L717.4 171.9L718.4 170.4ZM711.4 181.8L714.4 178.0L717.7 178.0L720.2 175.0L722.2 178.0L722.7 181.8L721.5 183.6L720.2 185.4L719.0 184.6L716.4 183.1L716.4 180.6L714.7 180.6L712.7 180.3ZM710.1 133.7L711.4 134.5L709.9 140.0L708.4 143.0L706.6 140.0L708.4 135.9ZM677.9 150.0L680.0 148.1L683.0 147.9L683.7 149.5L681.2 152.4L680.0 152.9L677.9 152.1ZM730.8 110.9L733.8 108.8L735.8 110.6L736.6 112.1L735.3 115.9L734.0 117.4L733.0 116.8L732.0 116.8L732.0 113.9L731.0 112.4ZM737.6 109.1L741.6 107.2L743.4 108.5L742.1 110.9L739.1 111.5L737.8 112.1L736.6 110.6ZM733.8 108.5L735.3 106.3L738.3 103.9L742.1 103.6L746.1 103.6L746.6 101.7L748.6 99.2L749.9 97.6L749.1 99.8L752.9 98.2L754.2 96.0L756.2 92.8L756.7 89.5L756.7 86.9L757.4 85.6L759.2 84.9L760.5 87.9L761.7 90.8L760.7 95.1L759.2 96.0L759.2 99.2L758.2 101.4L758.9 103.2L756.7 105.4L756.2 103.6L754.4 104.8L753.7 106.6L752.2 106.6L749.1 106.6L748.4 105.7L748.9 107.5L746.1 110.3L744.4 108.5L744.6 106.6L741.6 106.6L739.1 107.5L737.6 107.5L735.3 108.5ZM756.9 84.9L758.7 83.5L757.7 81.9L759.2 81.2L761.2 80.8L764.7 82.9L767.5 79.5L771.3 78.4L770.0 74.9L767.5 76.0L764.2 73.9L761.7 70.7L761.0 70.7L760.7 74.2L760.0 78.4L757.7 78.8L756.2 81.2ZM761.7 69.2L763.2 66.3L765.5 68.1L765.0 65.2L763.2 63.4L764.2 57.7L768.0 57.7L765.0 53.8L765.0 45.8L764.5 40.9L763.7 37.9L762.2 40.9L761.2 45.8L762.2 51.9L761.7 57.7L761.7 63.4L761.5 67.1ZM838.9 311.1L843.0 312.8L842.2 315.5L839.7 319.5L839.2 321.6L835.4 324.1L833.9 329.8L830.9 332.3L827.9 332.3L823.3 330.1L825.9 325.8L828.4 323.0L832.2 320.2L835.2 317.5L837.2 313.8ZM838.9 291.8L843.0 294.5L846.0 298.2L847.2 301.7L852.3 301.7L853.0 304.6L849.8 307.2L849.5 310.1L845.5 314.8L844.0 313.8L845.0 310.1L841.7 307.2L843.7 304.6L844.0 299.8L841.0 295.1ZM817.1 251.1L820.8 253.6L824.6 257.1L823.3 257.3L819.1 254.1ZM777.6 213.4L781.8 213.4L785.6 212.1L787.4 210.1L787.6 211.6L784.4 214.6L780.6 215.4L777.6 214.1ZM783.9 206.0L786.9 207.8L789.4 210.8L788.6 211.1L785.6 207.8ZM793.4 213.1L796.4 215.9L795.7 216.9L793.7 214.6ZM806.0 223.0L809.0 223.5L808.3 224.5L806.2 224.0ZM808.5 220.7L810.5 223.5L809.5 223.5L808.5 221.7ZM823.6 236.9L825.1 238.2L824.4 239.5L823.6 238.5ZM825.1 240.8L826.6 241.6L825.6 241.9Z" fill="#f2f2f0"/>
<path d="M477.5 85.6L482.5 85.9L488.3 82.9L492.5 82.9L496.3 85.2L501.4 86.2L505.1 86.2L508.9 84.6L508.9 81.2L505.1 78.1L500.1 74.6L497.6 72.5L496.6 71.4L498.8 69.6L500.1 67.1L503.4 64.5L500.1 64.9L496.3 66.3L492.5 68.1L492.5 70.7L495.1 71.0L493.3 72.5L490.0 74.6L488.5 73.9L486.3 71.0L489.0 68.5L485.0 67.8L481.7 67.1L479.2 71.4L476.7 75.3L474.9 78.8L474.2 81.2L475.2 84.2ZM472.4 87.9L478.7 87.6L477.5 86.2L473.7 86.2ZM522.0 74.2L524.0 70.0L527.8 67.1L532.8 65.2L537.8 66.3L537.8 71.4L532.8 72.5L531.0 74.2L532.3 78.8L536.6 81.2L537.3 84.6L537.8 89.5L539.8 92.8L539.8 98.2L535.3 100.1L530.8 97.9L527.8 97.3L527.8 94.4L528.5 91.2L531.3 88.6L529.0 87.2L526.5 82.9L524.0 79.5L524.0 76.0ZM484.2 202.0L485.0 198.7L488.8 198.5L490.5 200.3L490.0 203.3L488.8 205.8L485.0 205.8L484.2 204.5ZM478.2 208.1L479.5 210.8L480.0 214.6L482.0 218.4L483.0 221.5L481.2 220.5L478.7 215.9L477.7 210.8ZM490.0 223.5L491.5 227.3L492.0 231.2L493.0 235.9L491.5 235.1L490.5 231.2L490.0 227.3ZM665.4 47.9L668.6 47.1L672.4 43.8L676.2 39.6L680.0 33.1L680.7 29.6L678.7 30.9L674.9 38.3L671.2 42.5L667.4 45.8ZM172.8 66.0L178.1 63.4L180.6 61.5L182.6 58.1L188.2 58.8L191.2 61.9L191.9 67.1L186.9 67.1L184.4 65.6L181.9 64.1L179.4 66.0L175.8 66.3ZM183.6 83.9L186.9 83.5L187.7 79.5L187.2 74.2L190.7 69.6L186.9 69.6L185.6 70.7L183.1 73.9L184.4 76.0L183.6 79.5ZM191.4 69.2L194.4 68.5L199.5 68.9L203.3 72.5L203.3 73.9L200.0 73.5L199.0 77.7L197.2 79.5L196.7 76.7L195.0 76.0L193.4 77.0L194.7 74.2L194.7 71.8ZM194.7 83.5L197.0 84.6L199.5 84.2L203.3 82.2L206.0 80.1L202.7 80.5L199.5 81.2L197.0 82.9ZM203.8 78.4L205.8 78.4L209.5 78.4L212.6 77.7L212.6 75.3L209.5 76.0L205.0 77.0ZM161.0 52.3L162.2 47.9L160.0 41.7L158.0 37.9L155.0 40.9L157.2 45.8L160.5 49.9Z" fill="#cad2d3"/>
<g><circle cx="479.5" cy="6.1" r="4.6" fill="#7d4a42" fill-opacity=".88"/><circle cx="449.4" cy="9.1" r="4.6" fill="#ea5638" fill-opacity=".88"/><circle cx="429.5" cy="26.2" r="4.6" fill="#dc5538" fill-opacity=".88"/><circle cx="388.6" cy="36.4" r="4.6" fill="#e6583a" fill-opacity=".88"/><circle cx="402.0" cy="37.6" r="4.6" fill="#df583c" fill-opacity=".88"/><circle cx="417.6" cy="44.4" r="4.6" fill="#d8452c" fill-opacity=".88"/><circle cx="417.6" cy="47.0" r="4.6" fill="#dc3f24" fill-opacity=".88"/><circle cx="451.5" cy="49.3" r="4.6" fill="#e2563a" fill-opacity=".88"/><circle cx="468.3" cy="52.3" r="4.6" fill="#885046" fill-opacity=".88"/><circle cx="432.6" cy="54.2" r="4.6" fill="#bb523e" fill-opacity=".88"/><circle cx="410.3" cy="55.2" r="4.6" fill="#f2583a" fill-opacity=".88"/><circle cx="444.2" cy="57.2" r="4.6" fill="#ee5a3b" fill-opacity=".88"/><circle cx="425.3" cy="60.3" r="4.6" fill="#cf5238" fill-opacity=".88"/><circle cx="440.3" cy="65.2" r="4.6" fill="#d05138" fill-opacity=".88"/><circle cx="426.3" cy="67.3" r="4.6" fill="#f25a3c" fill-opacity=".88"/><circle cx="471.4" cy="68.2" r="4.6" fill="#83504a" fill-opacity=".88"/><circle cx="462.5" cy="76.4" r="4.6" fill="#9c4f40" fill-opacity=".88"/><circle cx="449.4" cy="77.3" r="4.6" fill="#8c4e43" fill-opacity=".88"/><circle cx="381.4" cy="78.0" r="4.6" fill="#f4553a" fill-opacity=".88"/><circle cx="382.3" cy="87.2" r="4.6" fill="#a2473a" fill-opacity=".88"/><circle cx="463.6" cy="92.1" r="4.6" fill="#7e4a42" fill-opacity=".88"/><circle cx="480.5" cy="95.3" r="4.6" fill="#83493f" fill-opacity=".88"/><circle cx="491.4" cy="114.5" r="4.6" fill="#dc5238" fill-opacity=".88"/><circle cx="532.3" cy="129.1" r="4.6" fill="#9a4f44" fill-opacity=".88"/><circle cx="204.5" cy="73.3" r="4.6" fill="#f2573a" fill-opacity=".88"/><circle cx="217.6" cy="83.3" r="4.6" fill="#e2563b" fill-opacity=".88"/><circle cx="236.5" cy="149.4" r="4.6" fill="#b6543d" fill-opacity=".88"/><circle cx="180.5" cy="154.3" r="4.6" fill="#6e5250" fill-opacity=".88"/><circle cx="219.3" cy="177.2" r="4.6" fill="#6f534f" fill-opacity=".88"/><circle cx="210.6" cy="226.3" r="4.6" fill="#88554a" fill-opacity=".88"/><circle cx="286.5" cy="256.3" r="4.6" fill="#94584a" fill-opacity=".88"/><circle cx="225.5" cy="354.1" r="4.6" fill="#88554a" fill-opacity=".88"/><circle cx="468.5" cy="259.4" r="4.6" fill="#77504c" fill-opacity=".88"/><circle cx="474.5" cy="264.3" r="4.6" fill="#d8593f" fill-opacity=".88"/><circle cx="548.2" cy="247.1" r="4.6" fill="#a2503f" fill-opacity=".88"/><circle cx="725.4" cy="100.3" r="4.6" fill="#c25440" fill-opacity=".88"/><circle cx="755.4" cy="99.3" r="4.6" fill="#dc5a40" fill-opacity=".88"/><circle cx="709.4" cy="113.2" r="4.6" fill="#c75540" fill-opacity=".88"/><circle cx="707.5" cy="133.2" r="4.6" fill="#a95444" fill-opacity=".88"/><circle cx="690.4" cy="138.4" r="4.6" fill="#86514a" fill-opacity=".88"/><circle cx="656.5" cy="160.3" r="4.6" fill="#d25e42" fill-opacity=".88"/><circle cx="659.3" cy="186.8" r="4.6" fill="#7c4f48" fill-opacity=".88"/><circle cx="664.5" cy="192.3" r="4.6" fill="#f05a3c" fill-opacity=".88"/><circle cx="783.2" cy="286.1" r="4.6" fill="#ec5e40" fill-opacity=".88"/><circle cx="836.3" cy="317.5" r="4.6" fill="#e25a3c" fill-opacity=".88"/></g>
</svg></div>

<svg class="abs" id="chart" style="left:940px;top:385px" width="604" height="359" viewBox="940 385 604 359"><path d="M1005.5 614.5H1367" stroke="#ccc" stroke-width="1"/><path d="M1005.5 561.5H1367" stroke="#ccc" stroke-width="1"/><path d="M1005.5 509.5H1367" stroke="#ccc" stroke-width="1"/><path d="M1005.5 456.5H1367" stroke="#ccc" stroke-width="1"/><path d="M1005.5 404.5H1367" stroke="#ccc" stroke-width="1"/><path d="M1005.5 404V667.0" stroke="#333" stroke-width="1.1" fill="none"/><path d="M1005 666.5H1367.4" stroke="#333" stroke-width="1.1" fill="none"/><path d="M999.5 666.5H1005.5" stroke="#333" stroke-width="1.1"/><text x="994.5" y="671.1" font-family="Liberation Sans, sans-serif" font-size="15" fill="#333" text-anchor="end">0</text><path d="M999.5 614.1H1005.5" stroke="#333" stroke-width="1.1"/><text x="994.5" y="618.7" font-family="Liberation Sans, sans-serif" font-size="15" fill="#333" text-anchor="end">10</text><path d="M999.5 561.7H1005.5" stroke="#333" stroke-width="1.1"/><text x="994.5" y="566.3" font-family="Liberation Sans, sans-serif" font-size="15" fill="#333" text-anchor="end">20</text><path d="M999.5 509.3H1005.5" stroke="#333" stroke-width="1.1"/><text x="994.5" y="513.9" font-family="Liberation Sans, sans-serif" font-size="15" fill="#333" text-anchor="end">30</text><path d="M999.5 456.9H1005.5" stroke="#333" stroke-width="1.1"/><text x="994.5" y="461.5" font-family="Liberation Sans, sans-serif" font-size="15" fill="#333" text-anchor="end">40</text><path d="M999.5 404.5H1005.5" stroke="#333" stroke-width="1.1"/><text x="994.5" y="409.1" font-family="Liberation Sans, sans-serif" font-size="15" fill="#333" text-anchor="end">50</text><path d="M1093.1 666.5V672.5" stroke="#333" stroke-width="1.1"/><path d="M1202.6 666.5V672.5" stroke="#333" stroke-width="1.1"/><path d="M1312.1 666.5V672.5" stroke="#333" stroke-width="1.1"/><path d="M1366.9 666.5V672.5" stroke="#333" stroke-width="1.1"/><text x="1101.6" y="688.4" font-family="Liberation Sans, sans-serif" font-size="15" fill="#333" text-anchor="middle" textLength="82.3" lengthAdjust="spacing">2023-08-21</text><text x="1211.2" y="688.4" font-family="Liberation Sans, sans-serif" font-size="15" fill="#333" text-anchor="middle" textLength="82.3" lengthAdjust="spacing">2023-10-02</text><text x="1320.7" y="688.4" font-family="Liberation Sans, sans-serif" font-size="15" fill="#333" text-anchor="middle" textLength="82.3" lengthAdjust="spacing">2023-11-13</text><text x="1184.5" y="710" font-family="Liberation Sans, sans-serif" font-size="15" fill="#333" text-anchor="middle" textLength="34.5" lengthAdjust="spacing">Date</text><text transform="translate(964.3 535.2) rotate(-90)" font-family="Liberation Sans, sans-serif" font-size="15" fill="#333" text-anchor="middle" textLength="187" lengthAdjust="spacing">Smoothed Percentage (%)</text><path d="M1011.0 666.5L1029.2 666.5L1047.5 666.5L1065.8 666.2L1084.0 665.7L1102.2 661.6L1120.5 662.3L1138.8 661.8L1157.0 661.0L1175.2 659.4L1193.5 657.6L1211.8 654.1L1230.0 650.3L1248.2 643.7L1266.5 634.0L1284.8 623.5L1303.0 613.1L1321.2 591.0L1339.5 563.8L1357.8 546.7" fill="none" stroke="#c23531" stroke-width="2.25" stroke-linejoin="bevel"/><g fill="#fff" stroke="#c23531" stroke-width="1.15"><circle cx="1011.0" cy="666.5" r="2.4"/><circle cx="1029.2" cy="666.5" r="2.4"/><circle cx="1047.5" cy="666.5" r="2.4"/><circle cx="1065.8" cy="666.2" r="2.4"/><circle cx="1084.0" cy="665.7" r="2.4"/><circle cx="1102.2" cy="661.6" r="2.4"/><circle cx="1120.5" cy="662.3" r="2.4"/><circle cx="1138.8" cy="661.8" r="2.4"/><circle cx="1157.0" cy="661.0" r="2.4"/><circle cx="1175.2" cy="659.4" r="2.4"/><circle cx="1193.5" cy="657.6" r="2.4"/><circle cx="1211.8" cy="654.1" r="2.4"/><circle cx="1230.0" cy="650.3" r="2.4"/><circle cx="1248.2" cy="643.7" r="2.4"/><circle cx="1266.5" cy="634.0" r="2.4"/><circle cx="1284.8" cy="623.5" r="2.4"/><circle cx="1303.0" cy="613.1" r="2.4"/><circle cx="1321.2" cy="591.0" r="2.4"/><circle cx="1339.5" cy="563.8" r="2.4"/><circle cx="1357.8" cy="546.7" r="2.4"/></g><path d="M1011.0 666.5L1029.2 666.5L1047.5 666.5L1065.8 666.5L1084.0 666.4L1102.2 666.0L1120.5 665.7L1138.8 665.5L1157.0 664.9L1175.2 664.1L1193.5 663.1L1211.8 660.7L1230.0 657.6L1248.2 654.1L1266.5 648.8L1284.8 642.4L1303.0 633.5L1321.2 617.2L1339.5 586.3L1357.8 453.2" fill="none" stroke="#2f4554" stroke-width="2.25" stroke-linejoin="bevel"/><g fill="#fff" stroke="#2f4554" stroke-width="1.15"><circle cx="1011.0" cy="666.5" r="2.4"/><circle cx="1029.2" cy="666.5" r="2.4"/><circle cx="1047.5" cy="666.5" r="2.4"/><circle cx="1065.8" cy="666.5" r="2.4"/><circle cx="1084.0" cy="666.4" r="2.4"/><circle cx="1102.2" cy="666.0" r="2.4"/><circle cx="1120.5" cy="665.7" r="2.4"/><circle cx="1138.8" cy="665.5" r="2.4"/><circle cx="1157.0" cy="664.9" r="2.4"/><circle cx="1175.2" cy="664.1" r="2.4"/><circle cx="1193.5" cy="663.1" r="2.4"/><circle cx="1211.8" cy="660.7" r="2.4"/><circle cx="1230.0" cy="657.6" r="2.4"/><circle cx="1248.2" cy="654.1" r="2.4"/><circle cx="1266.5" cy="648.8" r="2.4"/><circle cx="1284.8" cy="642.4" r="2.4"/><circle cx="1303.0" cy="633.5" r="2.4"/><circle cx="1321.2" cy="617.2" r="2.4"/><circle cx="1339.5" cy="586.3" r="2.4"/><circle cx="1357.8" cy="453.2" r="2.4"/></g><path d="M1011.0 666.5L1029.2 656.9L1047.5 652.9L1065.8 651.6L1084.0 648.4L1102.2 628.1L1120.5 628.5L1138.8 620.5L1157.0 624.1L1175.2 619.1L1193.5 617.2L1211.8 608.5L1230.0 611.0L1248.2 615.8L1266.5 613.2L1284.8 577.9L1303.0 575.8L1321.2 574.0L1339.5 573.2L1357.8 572.7" fill="none" stroke="#61a0a8" stroke-width="2.25" stroke-linejoin="bevel"/><g fill="#fff" stroke="#61a0a8" stroke-width="1.15"><circle cx="1011.0" cy="666.5" r="2.4"/><circle cx="1029.2" cy="656.9" r="2.4"/><circle cx="1047.5" cy="652.9" r="2.4"/><circle cx="1065.8" cy="651.6" r="2.4"/><circle cx="1084.0" cy="648.4" r="2.4"/><circle cx="1102.2" cy="628.1" r="2.4"/><circle cx="1120.5" cy="628.5" r="2.4"/><circle cx="1138.8" cy="620.5" r="2.4"/><circle cx="1157.0" cy="624.1" r="2.4"/><circle cx="1175.2" cy="619.1" r="2.4"/><circle cx="1193.5" cy="617.2" r="2.4"/><circle cx="1211.8" cy="608.5" r="2.4"/><circle cx="1230.0" cy="611.0" r="2.4"/><circle cx="1248.2" cy="615.8" r="2.4"/><circle cx="1266.5" cy="613.2" r="2.4"/><circle cx="1284.8" cy="577.9" r="2.4"/><circle cx="1303.0" cy="575.8" r="2.4"/><circle cx="1321.2" cy="574.0" r="2.4"/><circle cx="1339.5" cy="573.2" r="2.4"/><circle cx="1357.8" cy="572.7" r="2.4"/></g><path d="M1011.0 666.5L1029.2 666.5L1047.5 666.5L1065.8 666.5L1084.0 666.2L1102.2 664.9L1120.5 664.4L1138.8 663.6L1157.0 662.6L1175.2 661.0L1193.5 658.9L1211.8 655.5L1230.0 651.3L1248.2 645.0L1266.5 636.6L1284.8 626.2L1303.0 609.9L1321.2 589.5L1339.5 562.7L1357.8 437.5" fill="none" stroke="#d48265" stroke-width="2.25" stroke-linejoin="bevel"/><g fill="#fff" stroke="#d48265" stroke-width="1.15"><circle cx="1011.0" cy="666.5" r="2.4"/><circle cx="1029.2" cy="666.5" r="2.4"/><circle cx="1047.5" cy="666.5" r="2.4"/><circle cx="1065.8" cy="666.5" r="2.4"/><circle cx="1084.0" cy="666.2" r="2.4"/><circle cx="1102.2" cy="664.9" r="2.4"/><circle cx="1120.5" cy="664.4" r="2.4"/><circle cx="1138.8" cy="663.6" r="2.4"/><circle cx="1157.0" cy="662.6" r="2.4"/><circle cx="1175.2" cy="661.0" r="2.4"/><circle cx="1193.5" cy="658.9" r="2.4"/><circle cx="1211.8" cy="655.5" r="2.4"/><circle cx="1230.0" cy="651.3" r="2.4"/><circle cx="1248.2" cy="645.0" r="2.4"/><circle cx="1266.5" cy="636.6" r="2.4"/><circle cx="1284.8" cy="626.2" r="2.4"/><circle cx="1303.0" cy="609.9" r="2.4"/><circle cx="1321.2" cy="589.5" r="2.4"/><circle cx="1339.5" cy="562.7" r="2.4"/><circle cx="1357.8" cy="437.5" r="2.4"/></g><path d="M1011.0 666.5L1029.2 666.5L1047.5 666.5L1065.8 666.5L1084.0 666.5L1102.2 666.5L1120.5 666.5L1138.8 666.5L1157.0 666.5L1175.2 666.2L1193.5 666.0L1211.8 665.7L1230.0 665.5L1248.2 665.2L1266.5 664.9L1284.8 664.9L1303.0 664.9L1321.2 664.9L1339.5 664.9L1357.8 664.9" fill="none" stroke="#91c7ae" stroke-width="2.25" stroke-linejoin="bevel"/><g fill="#fff" stroke="#91c7ae" stroke-width="1.15"><circle cx="1011.0" cy="666.5" r="2.4"/><circle cx="1029.2" cy="666.5" r="2.4"/><circle cx="1047.5" cy="666.5" r="2.4"/><circle cx="1065.8" cy="666.5" r="2.4"/><circle cx="1084.0" cy="666.5" r="2.4"/><circle cx="1102.2" cy="666.5" r="2.4"/><circle cx="1120.5" cy="666.5" r="2.4"/><circle cx="1138.8" cy="666.5" r="2.4"/><circle cx="1157.0" cy="666.5" r="2.4"/><circle cx="1175.2" cy="666.2" r="2.4"/><circle cx="1193.5" cy="666.0" r="2.4"/><circle cx="1211.8" cy="665.7" r="2.4"/><circle cx="1230.0" cy="665.5" r="2.4"/><circle cx="1248.2" cy="665.2" r="2.4"/><circle cx="1266.5" cy="664.9" r="2.4"/><circle cx="1284.8" cy="664.9" r="2.4"/><circle cx="1303.0" cy="664.9" r="2.4"/><circle cx="1321.2" cy="664.9" r="2.4"/><circle cx="1339.5" cy="664.9" r="2.4"/><circle cx="1357.8" cy="664.9" r="2.4"/></g><path d="M1011.0 666.5L1029.2 666.5L1047.5 666.5L1065.8 666.5L1084.0 666.5L1102.2 666.2L1120.5 666.0L1138.8 665.7L1157.0 665.5L1175.2 664.9L1193.5 663.9L1211.8 662.3L1230.0 659.7L1248.2 656.0L1266.5 650.3L1284.8 645.5L1303.0 640.8L1321.2 631.9L1339.5 623.0L1357.8 616.5" fill="none" stroke="#749f83" stroke-width="2.25" stroke-linejoin="bevel"/><g fill="#fff" stroke="#749f83" stroke-width="1.15"><circle cx="1011.0" cy="666.5" r="2.4"/><circle cx="1029.2" cy="666.5" r="2.4"/><circle cx="1047.5" cy="666.5" r="2.4"/><circle cx="1065.8" cy="666.5" r="2.4"/><circle cx="1084.0" cy="666.5" r="2.4"/><circle cx="1102.2" cy="666.2" r="2.4"/><circle cx="1120.5" cy="666.0" r="2.4"/><circle cx="1138.8" cy="665.7" r="2.4"/><circle cx="1157.0" cy="665.5" r="2.4"/><circle cx="1175.2" cy="664.9" r="2.4"/><circle cx="1193.5" cy="663.9" r="2.4"/><circle cx="1211.8" cy="662.3" r="2.4"/><circle cx="1230.0" cy="659.7" r="2.4"/><circle cx="1248.2" cy="656.0" r="2.4"/><circle cx="1266.5" cy="650.3" r="2.4"/><circle cx="1284.8" cy="645.5" r="2.4"/><circle cx="1303.0" cy="640.8" r="2.4"/><circle cx="1321.2" cy="631.9" r="2.4"/><circle cx="1339.5" cy="623.0" r="2.4"/><circle cx="1357.8" cy="616.5" r="2.4"/></g><path d="M1011.0 666.5L1029.2 666.5L1047.5 666.5L1065.8 666.5L1084.0 666.5L1102.2 666.4L1120.5 666.2L1138.8 666.1L1157.0 665.9L1175.2 665.5L1193.5 664.9L1211.8 664.1L1230.0 663.1L1248.2 661.8L1266.5 660.5L1284.8 657.3L1303.0 653.1L1321.2 645.0L1339.5 633.5L1357.8 625.3" fill="none" stroke="#ca8622" stroke-width="2.25" stroke-linejoin="bevel"/><g fill="#fff" stroke="#ca8622" stroke-width="1.15"><circle cx="1011.0" cy="666.5" r="2.4"/><circle cx="1029.2" cy="666.5" r="2.4"/><circle cx="1047.5" cy="666.5" r="2.4"/><circle cx="1065.8" cy="666.5" r="2.4"/><circle cx="1084.0" cy="666.5" r="2.4"/><circle cx="1102.2" cy="666.4" r="2.4"/><circle cx="1120.5" cy="666.2" r="2.4"/><circle cx="1138.8" cy="666.1" r="2.4"/><circle cx="1157.0" cy="665.9" r="2.4"/><circle cx="1175.2" cy="665.5" r="2.4"/><circle cx="1193.5" cy="664.9" r="2.4"/><circle cx="1211.8" cy="664.1" r="2.4"/><circle cx="1230.0" cy="663.1" r="2.4"/><circle cx="1248.2" cy="661.8" r="2.4"/><circle cx="1266.5" cy="660.5" r="2.4"/><circle cx="1284.8" cy="657.3" r="2.4"/><circle cx="1303.0" cy="653.1" r="2.4"/><circle cx="1321.2" cy="645.0" r="2.4"/><circle cx="1339.5" cy="633.5" r="2.4"/><circle cx="1357.8" cy="625.3" r="2.4"/></g><path d="M1011.0 666.5L1029.2 666.5L1047.5 666.5L1065.8 666.5L1084.0 666.5L1102.2 666.2L1120.5 666.0L1138.8 665.7L1157.0 665.5L1175.2 664.9L1193.5 664.1L1211.8 662.8L1230.0 661.3L1248.2 659.7L1266.5 657.6L1284.8 653.1L1303.0 648.8L1321.2 617.2L1339.5 555.4L1357.8 511.9" fill="none" stroke="#bda29a" stroke-width="2.25" stroke-linejoin="bevel"/><g fill="#fff" stroke="#bda29a" stroke-width="1.15"><circle cx="1011.0" cy="666.5" r="2.4"/><circle cx="1029.2" cy="666.5" r="2.4"/><circle cx="1047.5" cy="666.5" r="2.4"/><circle cx="1065.8" cy="666.5" r="2.4"/><circle cx="1084.0" cy="666.5" r="2.4"/><circle cx="1102.2" cy="666.2" r="2.4"/><circle cx="1120.5" cy="666.0" r="2.4"/><circle cx="1138.8" cy="665.7" r="2.4"/><circle cx="1157.0" cy="665.5" r="2.4"/><circle cx="1175.2" cy="664.9" r="2.4"/><circle cx="1193.5" cy="664.1" r="2.4"/><circle cx="1211.8" cy="662.8" r="2.4"/><circle cx="1230.0" cy="661.3" r="2.4"/><circle cx="1248.2" cy="659.7" r="2.4"/><circle cx="1266.5" cy="657.6" r="2.4"/><circle cx="1284.8" cy="653.1" r="2.4"/><circle cx="1303.0" cy="648.8" r="2.4"/><circle cx="1321.2" cy="617.2" r="2.4"/><circle cx="1339.5" cy="555.4" r="2.4"/><circle cx="1357.8" cy="511.9" r="2.4"/></g><path d="M1385.5 402.0H1394.3M1407.7 402.0H1416.5" stroke="#c23531" stroke-width="1.45"/><circle cx="1401" cy="402.0" r="6.6" fill="#fff" stroke="#c23531" stroke-width="1.45"/><text x="1423.5" y="407.2" font-family="Liberation Sans, sans-serif" font-size="15.2" fill="#333" textLength="78" lengthAdjust="spacing">Europe-UK</text><path d="M1385.5 429.8H1394.3M1407.7 429.8H1416.5" stroke="#2f4554" stroke-width="1.45"/><circle cx="1401" cy="429.8" r="6.6" fill="#fff" stroke="#2f4554" stroke-width="1.45"/><text x="1423.5" y="435.0" font-family="Liberation Sans, sans-serif" font-size="15.2" fill="#333" textLength="46" lengthAdjust="spacing">Global</text><path d="M1385.5 457.6H1394.3M1407.7 457.6H1416.5" stroke="#61a0a8" stroke-width="1.45"/><circle cx="1401" cy="457.6" r="6.6" fill="#fff" stroke="#61a0a8" stroke-width="1.45"/><text x="1423.5" y="462.8" font-family="Liberation Sans, sans-serif" font-size="15.2" fill="#333" textLength="40.8" lengthAdjust="spacing">Africa</text><path d="M1385.5 485.4H1394.3M1407.7 485.4H1416.5" stroke="#d48265" stroke-width="1.45"/><circle cx="1401" cy="485.4" r="6.6" fill="#fff" stroke="#d48265" stroke-width="1.45"/><text x="1423.5" y="490.6" font-family="Liberation Sans, sans-serif" font-size="15.2" fill="#333" textLength="97" lengthAdjust="spacing">Europe-noUK</text><path d="M1385.5 513.2H1394.3M1407.7 513.2H1416.5" stroke="#91c7ae" stroke-width="1.45"/><circle cx="1401" cy="513.2" r="6.6" fill="#fff" stroke="#91c7ae" stroke-width="1.45"/><text x="1423.5" y="518.4" font-family="Liberation Sans, sans-serif" font-size="15.2" fill="#333" textLength="100.4" lengthAdjust="spacing">SouthAmerica</text><path d="M1385.5 541.0H1394.3M1407.7 541.0H1416.5" stroke="#749f83" stroke-width="1.45"/><circle cx="1401" cy="541.0" r="6.6" fill="#fff" stroke="#749f83" stroke-width="1.45"/><text x="1423.5" y="546.2" font-family="Liberation Sans, sans-serif" font-size="15.2" fill="#333" textLength="57.2" lengthAdjust="spacing">Oceania</text><path d="M1385.5 568.8H1394.3M1407.7 568.8H1416.5" stroke="#ca8622" stroke-width="1.45"/><circle cx="1401" cy="568.8" r="6.6" fill="#fff" stroke="#ca8622" stroke-width="1.45"/><text x="1423.5" y="574.0" font-family="Liberation Sans, sans-serif" font-size="15.2" fill="#333" textLength="100.4" lengthAdjust="spacing">NorthAmerica</text><path d="M1385.5 596.6H1394.3M1407.7 596.6H1416.5" stroke="#bda29a" stroke-width="1.45"/><circle cx="1401" cy="596.6" r="6.6" fill="#fff" stroke="#bda29a" stroke-width="1.45"/><text x="1423.5" y="601.8" font-family="Liberation Sans, sans-serif" font-size="15.2" fill="#333" textLength="29.2" lengthAdjust="spacing">Asia</text><rect x="1414" y="644.5" width="84" height="27" fill="#ededed"/><text x="1415" y="664" font-family="Liberation Sans, sans-serif" font-size="15" fill="#000" textLength="74.5" lengthAdjust="spacing">01/12/2023</text><path d="M1005.5 744V719.5H1370.5" fill="none" stroke="#ddd" stroke-width="1"/><rect x="1328.2" y="719" width="42.4" height="26" fill="#dde3ee"/><defs><filter id="sh" x="-40%" y="-40%" width="180%" height="180%"><feDropShadow dx="1.6" dy="1.6" stdDeviation="1.7" flood-color="#000" flood-opacity=".5"/></filter></defs><circle cx="1327.8" cy="737.3" r="12.6" fill="#fff" filter="url(#sh)"/><path d="M1323.2 733.6H1332.3999999999999M1323.2 740.4H1332.3999999999999" stroke="#555" stroke-width="1.5"/><circle cx="1370.3" cy="737.3" r="12.6" fill="#fff" filter="url(#sh)"/><path d="M1365.7 733.6H1374.8999999999999M1365.7 740.4H1374.8999999999999" stroke="#555" stroke-width="1.5"/></svg>

<!-- right-edge widget -->
<svg class="abs" style="left:1530px;top:192px" width="14" height="54" viewBox="1530 192 14 54">
<rect x="1532.3" y="194.3" width="20" height="49.4" rx="4" fill="#c1c1c1"/>
<path d="M1537.5 200H1544V203.2H1542.2L1544 205V208.6L1540.2 204.8V212H1537.5Z" fill="#fff"/>
<path d="M1537.5 238H1544V234.8H1542.2L1544 233V229.4L1540.2 233.2V226H1537.5Z" fill="#fff"/>
</svg>
</body></html>
